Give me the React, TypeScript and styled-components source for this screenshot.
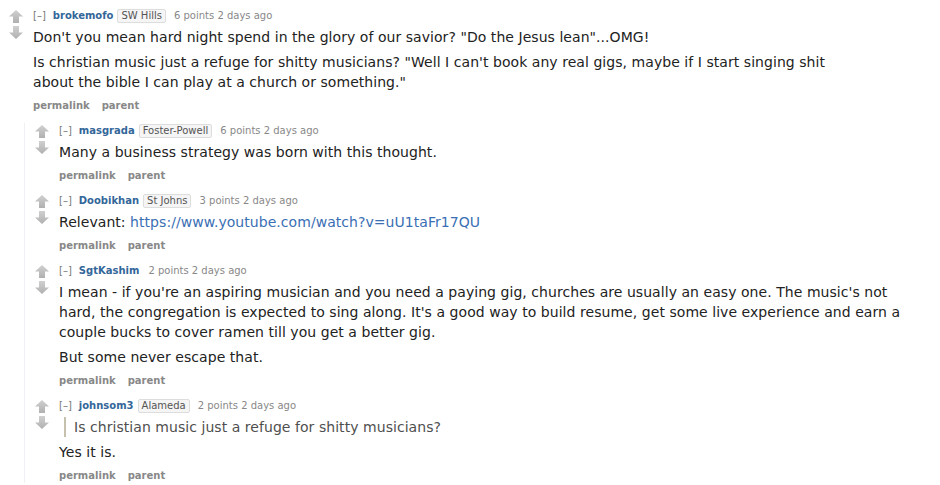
import styled, { createGlobalStyle } from "styled-components";

const GlobalStyle = createGlobalStyle`
  body {
    margin: 0;
    background: #fff;
    font-family: "DejaVu Sans", Verdana, sans-serif;
  }
`;

const Link = styled.a`
  color: #3a6fb4;
  text-decoration: none;
`;

interface CommentData {
  author: string;
  flair?: string;
  points: number;
  quote?: string;
  paragraphs: React.ReactNode[];
}

const parent: CommentData = {
  author: "brokemofo",
  flair: "SW Hills",
  points: 6,
  paragraphs: [
    `Don't you mean hard night spend in the glory of our savior? "Do the Jesus lean"...OMG!`,
    `Is christian music just a refuge for shitty musicians? "Well I can't book any real gigs, maybe if I start singing shit about the bible I can play at a church or something."`,
  ],
};

const children: CommentData[] = [
  {
    author: "masgrada",
    flair: "Foster-Powell",
    points: 6,
    paragraphs: ["Many a business strategy was born with this thought."],
  },
  {
    author: "Doobikhan",
    flair: "St Johns",
    points: 3,
    paragraphs: [
      <>
        Relevant: <Link href="#">https://www.youtube.com/watch?v=uU1taFr17QU</Link>
      </>,
    ],
  },
  {
    author: "SgtKashim",
    points: 2,
    paragraphs: [
      "I mean - if you're an aspiring musician and you need a paying gig, churches are usually an easy one. The music's not hard, the congregation is expected to sing along. It's a good way to build resume, get some live experience and earn a couple bucks to cover ramen till you get a better gig.",
      "But some never escape that.",
    ],
  },
  {
    author: "johnsom3",
    flair: "Alameda",
    points: 2,
    quote: "Is christian music just a refuge for shitty musicians?",
    paragraphs: ["Yes it is."],
  },
];

function Arrow({ down }: { down?: boolean }) {
  const id = down ? "gd" : "gu";
  return (
    <svg width="14" height="13" viewBox="0 0 14 13" style={down ? { transform: "rotate(180deg)" } : undefined}>
      <defs>
        <linearGradient id={id} x1="0" y1="0" x2="0" y2="1">
          <stop offset="0" stopColor={down ? "#b0b0b0" : "#d0d0d0"} />
          <stop offset="1" stopColor={down ? "#d0d0d0" : "#b0b0b0"} />
        </linearGradient>
      </defs>
      <path d="M7 0 L14 6.5 L10 6.5 L10 13 L4 13 L4 6.5 L0 6.5 Z" fill={`url(#${id})`} />
    </svg>
  );
}

function CommentEntry({ c, maxWidth }: { c: CommentData; maxWidth: number }) {
  return (
    <>
      <Midcol>
        <Arrow />
        <Arrow down />
      </Midcol>
      <Entry>
        <Tagline>
          <Expand>[–]</Expand>
          <Author>{c.author}</Author>
          {c.flair && <Flair>{c.flair}</Flair>}
          <Points $gap={c.flair ? 0 : 5}>{c.points} points 2 days ago</Points>
        </Tagline>
        <Body $max={maxWidth}>
          {c.quote && <Quote>{c.quote}</Quote>}
          {c.paragraphs.map((p, i) => (
            <P key={i}>{p}</P>
          ))}
        </Body>
        <Buttons>
          <li>permalink</li>
          <li>parent</li>
        </Buttons>
      </Entry>
    </>
  );
}

export default function App() {
  return (
    <Page>
      <GlobalStyle />
      <Comment>
        <Row>
          <CommentEntry c={parent} maxWidth={830} />
        </Row>
        <Child>
          {children.map(c => (
            <ChildComment key={c.author}>
              <CommentEntry c={c} maxWidth={850} />
            </ChildComment>
          ))}
        </Child>
      </Comment>
    </Page>
  );
}

const Page = styled.div`
  width: 940px;
  height: 485px;
  overflow: hidden;
  padding-top: 8px;
  box-sizing: border-box;
`;

const Comment = styled.div`
  display: flex;
  flex-direction: column;
`;

const Row = styled.div`
  display: flex;
  padding-left: 9px;
`;

const Child = styled.div`
  margin-left: 24px;
  margin-top: 10px;
  border-left: 1px solid #eef0f4;
  display: flex;
  flex-direction: column;
  gap: 10px;
`;

const ChildComment = styled.div`
  display: flex;
  padding-left: 10px;
`;

const Midcol = styled.div`
  width: 14px;
  margin-right: 10px;
  padding-top: 2px;
  display: flex;
  flex-direction: column;
  gap: 3px;
  flex-shrink: 0;
`;

const Entry = styled.div`
  flex: 1;
  min-width: 0;
`;

const Tagline = styled.div`
  margin-top: 1px;
  font-size: 10px;
  line-height: 14px;
  color: #888;
  display: flex;
  align-items: center;
  white-space: nowrap;
`;

const Expand = styled.span`
  color: #777;
  margin-right: 7px;
`;

const Author = styled.span`
  color: #369;
  font-weight: bold;
  margin-right: 4px;
`;

const Flair = styled.span`
  background: #f5f5f5;
  border: 1px solid #ddd;
  border-radius: 2px;
  color: #545454;
  padding: 0 3px;
  line-height: 12px;
  margin-right: 8px;
`;

const Points = styled.span<{ $gap: number }>`
  margin-left: ${({ $gap }) => $gap}px;
`;

const Body = styled.div<{ $max: number }>`
  margin-top: 4px;
  max-width: ${({ $max }) => $max}px;
  font-size: 14px;
  line-height: 20px;
  letter-spacing: 0.05px;
  color: #222;
  display: flex;
  flex-direction: column;
  gap: 5px;
`;

const P = styled.p`
  margin: 0;
`;

const Quote = styled.blockquote`
  margin: 0;
  border-left: 2px solid #c5c1ad;
  padding: 0 8px;
  margin-left: 5px;
  color: #4f4f4f;
`;

const Buttons = styled.ul`
  list-style: none;
  margin: 7px 0 0;
  padding: 0;
  display: flex;
  gap: 12px;
  font-size: 10px;
  line-height: 14px;
  font-weight: bold;
  color: #888;
`;
